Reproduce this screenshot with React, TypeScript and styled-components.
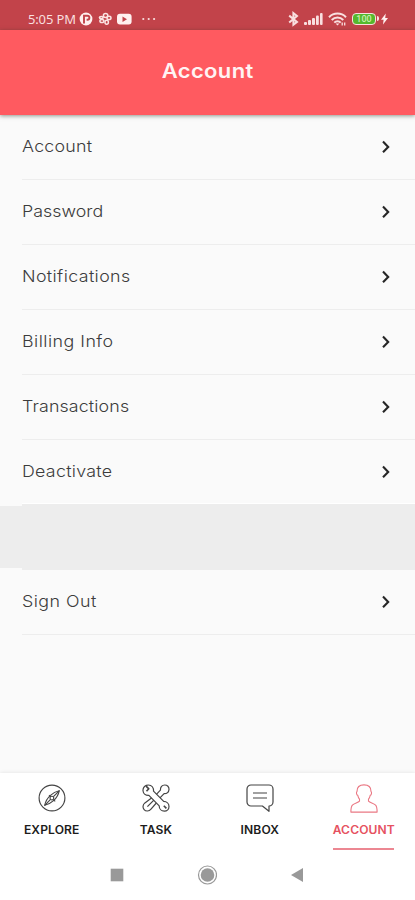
import React from 'react';
import styled, { createGlobalStyle } from 'styled-components';

const GlobalStyle = createGlobalStyle`
  * { box-sizing: border-box; }
  html, body { margin: 0; padding: 0; }
  body { background: #fafafa; font-family: Inter, "Open Sans", sans-serif; }
`;

const Screen = styled.div`
  width: 415px;
  height: 900px;
  display: flex;
  flex-direction: column;
  overflow: hidden;
  background: #fafafa;
`;

const StatusBar = styled.div`
  height: 30px;
  flex: none;
  display: flex;
  justify-content: space-between;
  align-items: center;
  padding: 8px 27px 0 28px;
  background: #c2434a;
  color: #f9dfdf;
`;

const StatusGroup = styled.div<{ $gap: number }>`
  display: flex;
  align-items: center;
  gap: ${(p) => p.$gap}px;
  svg { display: block; }
`;

const Clock = styled.span`
  width: 47px;
  font: 400 13px/16px "Noto Sans", sans-serif;
  letter-spacing: -0.15px;
  white-space: nowrap;
`;

const Header = styled.header`
  height: 85px;
  flex: none;
  display: flex;
  align-items: center;
  justify-content: center;
  padding-bottom: 4px;
  background: #ff5a60;
  box-shadow: 0 1px 4px rgba(40, 50, 30, 0.5);
  z-index: 1;
`;

const Title = styled.h1`
  margin: 0;
  font-size: 20px;
  line-height: 26px;
  font-weight: 600;
  letter-spacing: 0.3px;
  transform: scaleX(1.1);
  color: #fff3f3;
`;

const List = styled.main`
  flex: 1;
  display: flex;
  flex-direction: column;
`;

const Row = styled.div<{ $last?: boolean }>`
  height: ${(p) => (p.$last ? 64 : 65)}px;
  flex: none;
  display: flex;
  align-items: center;
  justify-content: space-between;
  margin-left: 22px;
  padding-right: 24px;
  border-bottom: 1px solid ${(p) => (p.$last ? '#fff' : '#ededed')};
`;

const RowLabel = styled.span<{ $spacing: number }>`
  padding-bottom: 2px;
  font-size: 16.5px;
  line-height: 22px;
  font-weight: 300;
  letter-spacing: ${(p) => p.$spacing}px;
  transform: scaleX(1.08);
  transform-origin: left center;
  color: #3c3c3c;
  white-space: nowrap;
`;

const Band = styled.div`
  height: 66px;
  flex: none;
  background:
    linear-gradient(#ededed, #ededed) 0 2px / 22px 62px no-repeat,
    linear-gradient(#ededed, #ededed) 22px 0 / 393px 66px no-repeat;
`;

const TabBar = styled.nav`
  height: 77px;
  flex: none;
  display: grid;
  grid-template-columns: 104px 104px 104px 103px;
  background: #fff;
  box-shadow: 0 0 4px rgba(0, 0, 0, 0.1);
`;

const Tab = styled.div<{ $active?: boolean }>`
  display: flex;
  flex-direction: column;
  align-items: center;
  padding-top: 11px;
  color: ${(p) => (p.$active ? '#e6525f' : '#1c1c1c')};
  svg { display: block; height: 29px; }
`;

const TabLabel = styled.span`
  margin-top: 9px;
  font-size: 11.2px;
  line-height: 16px;
  font-weight: 600;
  letter-spacing: 0.1px;
  transform: scaleX(1.08);
  white-space: nowrap;
`;

const Underline = styled.div`
  width: 61px;
  height: 3px;
  margin-top: 10px;
  background: #ec8792;
`;

const SystemNav = styled.div`
  height: 50px;
  flex: none;
  display: flex;
  align-items: center;
  padding-left: 110px;
  gap: 73px;
  background: #fff;
  svg { display: block; }
`;

const Chevron = () => (
  <svg width="10" height="14" viewBox="0 0 10 14" fill="none" stroke="#262626" strokeWidth="2.1">
    <path d="M2 1.6 7.2 6.9 2 12.2" />
  </svg>
);

const LeftStatusIcons = () => (
  <svg width="80" height="16" viewBox="0 0 80 16">
    <circle cx="7" cy="8" r="6.4" fill="#fff0ef" />
    <path d="M5 12.5V4.7h3.4a2 2 0 0 1 0 4H7.6" fill="none" stroke="#c2434a" strokeWidth="1.9" />
    <g fill="none" stroke="#fbe4e3" strokeWidth="1.5">
      <ellipse cx="26.6" cy="4.4" rx="2.2" ry="2" />
      <ellipse cx="30" cy="6.9" rx="2" ry="1.7" />
      <ellipse cx="27.7" cy="11.2" rx="1.7" ry="2" />
      <ellipse cx="22.9" cy="10" rx="2" ry="1.6" />
      <ellipse cx="22.3" cy="6.6" rx="1.9" ry="1.2" />
    </g>
    <rect x="38" y="2.8" width="14.6" height="10.8" rx="3" fill="#fff0ef" />
    <path d="M43.5 5.5v5.4l4.5-2.7z" fill="#c2434a" />
    <g fill="#f9dfdf">
      <circle cx="64.3" cy="8" r="1.1" />
      <circle cx="69.7" cy="8" r="1.1" />
      <circle cx="75.1" cy="8" r="1.1" />
    </g>
  </svg>
);

const Bluetooth = () => (
  <svg width="11" height="16" viewBox="0 0 11 16" fill="none" stroke="#f9dfdf" strokeWidth="2">
    <path d="M1.2 4.6 9 10.9 5.4 13.7V2.1L9 5 1.2 11.4" />
  </svg>
);

const Signal = () => (
  <svg width="19" height="14" viewBox="0 0 19 14" fill="#f9dfdf">
    <rect x="0" y="10" width="3" height="3" rx="1" />
    <rect x="4" y="8" width="3" height="5" rx="1" />
    <rect x="8" y="6" width="3" height="7" rx="1" />
    <rect x="12" y="3.5" width="2.8" height="9.5" rx="1" />
    <rect x="16" y="1" width="2.6" height="12" rx="1" />
  </svg>
);

const Wifi = () => (
  <svg width="19" height="14" viewBox="0 0 19 14" fill="none" stroke="#f9dfdf" strokeWidth="2">
    <path d="M1 5.2C5.7.4 13.3.4 18 5.2M3.7 8C7 4.8 12 4.8 15.3 8M6.3 10.6c1.7-1.7 4.7-1.7 6.4 0" />
    <path d="M9.5 13.6 7.6 11.5h3.8z" fill="#f9dfdf" stroke="none" />
    <path d="M14.2 10.6v3M16.7 10.6v3" strokeWidth="1.3" />
  </svg>
);

const BatteryBody = styled.div`
  position: relative;
  width: 24px;
  height: 12px;
  border: 1.5px solid #f9dfdf;
  border-radius: 4px;
  background: #55b82d;
  color: #c9eeb0;
  font: 500 9px/10px Roboto, sans-serif;
  text-align: center;
  &::after {
    content: '';
    position: absolute;
    right: -4px;
    top: 2px;
    width: 2px;
    height: 5px;
    border-radius: 0 2px 2px 0;
    background: #f9dfdf;
  }
`;

const Bolt = () => (
  <svg width="7" height="12" viewBox="0 0 7 12" fill="#fff0ef">
    <path d="M4.8.5 0 6.8h2.6L2 11.5 7 5H4.2z" />
  </svg>
);

const CompassIcon = () => (
  <svg width="28" height="29" viewBox="0 0 28 29" fill="none" stroke="#444" strokeWidth="1.15">
    <circle cx="14" cy="14" r="12.9" />
    <path d="M21.2 6.8C15.5 8 8.4 13 6.7 21.3 12.5 20 19.6 15 21.2 6.8Z" />
    <path d="M21.2 6.8 15.4 12.7M6.7 21.3l5.6-5.7M11 11.2l1.6 1.5M15.5 15.6l1.7 1.7" />
    <circle cx="13.9" cy="14.1" r="1.9" />
  </svg>
);

const ToolsIcon = () => (
  <svg width="28" height="29" viewBox="0 0 28 29" fill="#fff" stroke="#444" strokeWidth="1.2" strokeLinejoin="round">
    <path d="M13 11.8 18.4 6.2c-.1-3 1.6-5.2 4.4-5.2 2.5 0 4.4 1.9 4.2 4.5-.2 2.5-2.2 4.2-4.9 4.2l-5.6 5.7z" />
    <path d="M11.8 12.2 2.9 18.9c-2.2 1.9-2.5 4.8-.8 6.7s4.9 2 6.9-.4l7.5-8.7z" />
    <path d="m5.4 22.7 6.7-6.9" />
    <path d="M4.3 1.4c3-1.1 6.2.4 7 3.2.2.9.3 1.8.2 2.6l10.2 10.2c2.9.1 5.3 2.1 5.3 5 0 2.7-2 4.7-4.6 4.7-3 0-5.2-2.2-5.2-5.2L6.9 11.3c-3.1.2-5.7-1.7-5.9-4.6-.1-2.4 1.1-4.4 3.3-5.3z" />
    <path d="m4.1 2.2 2.7 2.6-2.3 2.5M21.8 21.8l2.6 2.6" fill="none" strokeWidth="1.6" />
  </svg>
);

const ChatIcon = () => (
  <svg width="28" height="29" viewBox="0 0 28 29" fill="none" stroke="#444" strokeWidth="1.2" strokeLinejoin="round">
    <path d="M5 1h18a4 4 0 0 1 4 4v13a4 4 0 0 1-4 4v5.3L16.4 22H5a4 4 0 0 1-4-4V5a4 4 0 0 1 4-4Z" />
    <path d="M7 9h14M7 14h14" />
  </svg>
);

const PersonIcon = () => (
  <svg width="28" height="29" viewBox="0 0 28 29" fill="none" stroke="#ea7884" strokeWidth="1.1" strokeLinejoin="round">
    <path d="M14 .9c4.5 0 7 2.5 7 6.5 1 1.1.5 3.6-.8 4-.4 2.1-1.1 3.1-1.7 3.8v2c1.7 1.7 5.2 2 7.1 4 1.3 1.4 1.5 3.8 1.5 6.9H.9c0-3.1.2-5.5 1.5-6.9 1.9-2 5.4-2.3 7.1-4v-2c-.6-.7-1.3-1.7-1.7-3.8-1.3-.4-1.8-2.9-.8-4C7 3.4 9.5.9 14 .9Z" />
  </svg>
);

const items: [string, number][] = [
  ['Account', 0.22],
  ['Password', 0.02],
  ['Notifications', 0.36],
  ['Billing Info', 0.44],
  ['Transactions', 0.12],
  ['Deactivate', 0.25],
];

export default function App() {
  return (
    <>
      <GlobalStyle />
      <Screen>
        <StatusBar>
          <StatusGroup $gap={4}>
            <Clock>5:05 PM</Clock>
            <LeftStatusIcons />
          </StatusGroup>
          <StatusGroup $gap={5}>
            <Bluetooth />
            <Signal />
            <Wifi />
            <BatteryBody>100</BatteryBody>
            <Bolt />
          </StatusGroup>
        </StatusBar>
        <Header>
          <Title>Account</Title>
        </Header>
        <List>
          {items.map(([label, spacing], index) => (
            <Row key={label} $last={index === items.length - 1}>
              <RowLabel $spacing={spacing}>{label}</RowLabel>
              <Chevron />
            </Row>
          ))}
          <Band />
          <Row>
            <RowLabel $spacing={0.44}>Sign Out</RowLabel>
            <Chevron />
          </Row>
        </List>
        <TabBar>
          <Tab>
            <CompassIcon />
            <TabLabel>EXPLORE</TabLabel>
          </Tab>
          <Tab>
            <ToolsIcon />
            <TabLabel>TASK</TabLabel>
          </Tab>
          <Tab>
            <ChatIcon />
            <TabLabel>INBOX</TabLabel>
          </Tab>
          <Tab $active>
            <PersonIcon />
            <TabLabel>ACCOUNT</TabLabel>
            <Underline />
          </Tab>
        </TabBar>
        <SystemNav>
          <svg width="14" height="14" viewBox="0 0 14 14"><rect x=".7" y=".7" width="12.6" height="12.6" fill="#999" /></svg>
          <svg width="20" height="20" viewBox="0 0 20 20">
            <circle cx="10.5" cy="10" r="9" fill="none" stroke="#999" strokeWidth="1.2" />
            <circle cx="10.5" cy="10" r="6.8" fill="#999" />
          </svg>
          <svg width="14" height="16" viewBox="0 0 14 16"><path d="M13 1v14L1 8z" fill="#999" /></svg>
        </SystemNav>
      </Screen>
    </>
  );
}
